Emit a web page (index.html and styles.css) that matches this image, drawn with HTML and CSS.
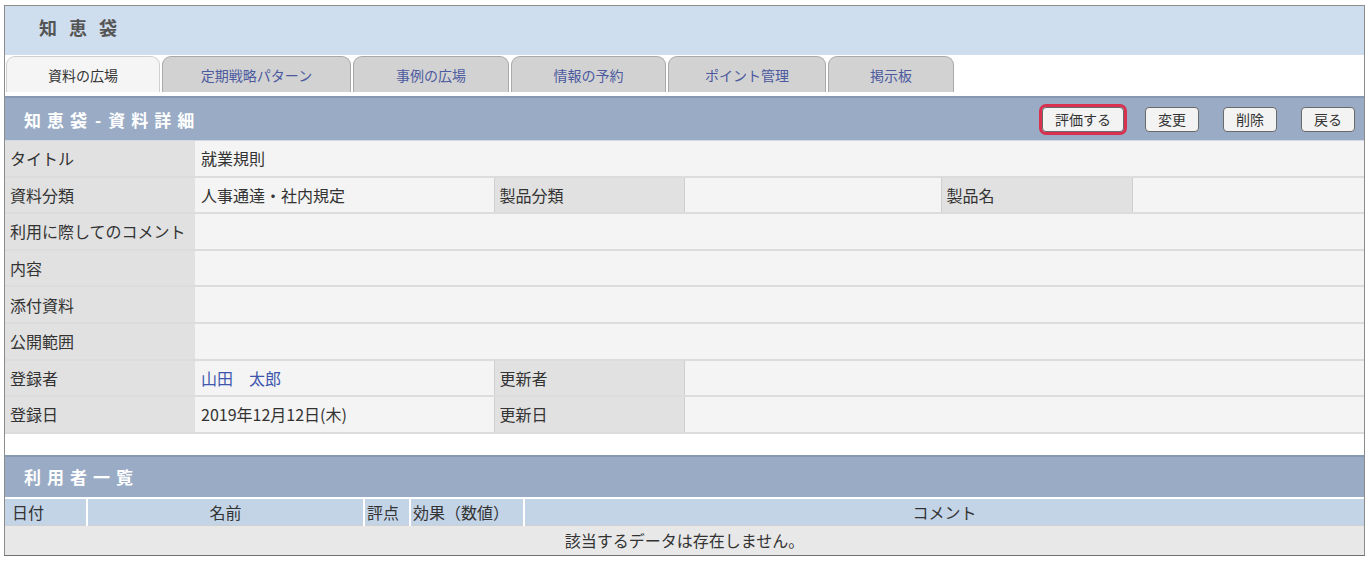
FILE: index.html
```html
<!DOCTYPE html>
<html lang="ja">
<head>
    <meta charset="UTF-8">
    <title>知恵袋 - 資料詳細</title>
    <link rel="stylesheet" href="styles.css">
</head>
<body>
    <div class="frame">
        <div class="app-head">知恵袋</div>

        <div class="tabs">
            <div class="tab active">資料の広場</div>
            <div class="tab w189">定期戦略パターン</div>
            <div class="tab w156">事例の広場</div>
            <div class="tab w155">情報の予約</div>
            <div class="tab w158">ポイント管理</div>
            <div class="tab w126">掲示板</div>
        </div>

        <div class="bar">
            <div class="bar-title">知恵袋<span class="dash">-</span>資料詳細</div>
            <div class="bar-btns">
                <button class="btn mark">評価する</button>
                <button class="btn">変更</button>
                <button class="btn">削除</button>
                <button class="btn">戻る</button>
            </div>
        </div>

        <table class="detail">
            <colgroup>
                <col style="width:190px">
                <col style="width:299px">
                <col style="width:190px">
                <col style="width:257px">
                <col style="width:191px">
                <col>
            </colgroup>
            <tr><th>タイトル</th><td colspan="5">就業規則</td></tr>
            <tr><th>資料分類</th><td>人事通達・社内規定</td><th>製品分類</th><td></td><th>製品名</th><td></td></tr>
            <tr><th>利用に際してのコメント</th><td colspan="5"></td></tr>
            <tr><th>内容</th><td colspan="5"></td></tr>
            <tr><th>添付資料</th><td colspan="5"></td></tr>
            <tr><th>公開範囲</th><td colspan="5"></td></tr>
            <tr><th>登録者</th><td><a class="user" href="#">山田　太郎</a></td><th>更新者</th><td colspan="3"></td></tr>
            <tr><th>登録日</th><td>2019年12月12日(木)</td><th>更新日</th><td colspan="3"></td></tr>
        </table>

        <div class="spacer"></div>

        <div class="bar small">
            <div class="bar-title">利用者一覧</div>
        </div>

        <table class="users">
            <colgroup>
                <col style="width:82px">
                <col style="width:277px">
                <col style="width:46px">
                <col style="width:114px">
                <col>
            </colgroup>
            <tr class="head">
                <th>日付</th>
                <th class="c">名前</th>
                <th class="tight">評点</th>
                <th class="tight">効果（数値）</th>
                <th class="c">コメント</th>
            </tr>
            <tr><td colspan="5" class="empty">該当するデータは存在しません。</td></tr>
        </table>
    </div>
</body>
</html>
```

FILE: styles.css
```css
/* 知恵袋 資料詳細 */
body {
    margin: 0;
    padding: 0;
    background: #fff;
    font-family: "Noto Sans CJK JP", "Noto Sans", sans-serif;
    color: #333;
}

.frame {
    width: 1359px;
    margin: 5px 0 0 4px;
    border: 1px solid #8c8c8c;
    border-bottom-color: #6f6f6f;
}

.app-head {
    height: 49px;
    line-height: 42px;
    background: #cfdeee;
    padding-left: 34px;
    font-size: 18px;
    font-weight: bold;
    letter-spacing: 12px;
    color: #555;
}

.tabs {
    display: flex;
    gap: 2px;
    padding: 1px 0 4px 1px;
    background: #fff;
}

.tab {
    width: 154px;
    height: 36px;
    line-height: 36px;
    box-sizing: border-box;
    border: 1px solid #a9a9a9;
    border-bottom: none;
    border-radius: 9px 9px 0 0;
    background: #d2d2d2;
    text-align: center;
    font-size: 14px;
    color: #4c5aa0;
}

.tab.active {
    background: #f5f5f5;
    color: #333;
    border-color: #cfcfcf;
}

.w189 { width: 189px; }
.w156 { width: 156px; }
.w155 { width: 155px; }
.w158 { width: 158px; }
.w126 { width: 126px; }

.bar {
    display: flex;
    align-items: center;
    justify-content: space-between;
    height: 42px;
    background: #9aacc5;
    border-top: 2px solid #8699b3;
    padding: 0 9px 0 19px;
}

.bar.small {
    height: 40px;
}

.bar-title {
    color: #fff;
    font-size: 17px;
    font-weight: bold;
    letter-spacing: 6px;
}

.dash {
    margin: 0 2px;
    letter-spacing: 5px;
}

.bar-btns {
    display: flex;
    gap: 24px;
}

.btn {
    height: 25px;
    padding: 0 12px;
    border: 1px solid #6a6a6a;
    border-radius: 4px;
    background: #f3f3f3;
    font-family: "Noto Sans CJK JP", sans-serif;
    font-size: 14px;
    color: #333;
    line-height: 22px;
}

.btn.mark {
    width: 82px;
    outline: 3px solid #d8304e;
    outline-offset: 0;
    margin-right: -3px;
}

table {
    width: 100%;
    border-collapse: collapse;
    table-layout: fixed;
}

.detail th,
.detail td {
    height: 34.6px;
    padding: 0 6px;
    font-size: 16px;
    font-weight: normal;
    text-align: left;
    border-top: 2px solid #dcdcdc;
    white-space: nowrap;
    overflow: hidden;
}

.detail tr:first-child th,
.detail tr:first-child td {
    border-top: 1px solid #d2d9e3;
}

.detail th {
    background: #e1e1e1;
    padding-left: 5px;
}

.detail td {
    background: #f4f4f4;
}

.detail td + th {
    border-left: 1px solid #cfcfcf;
    border-right: 1px solid #cfcfcf;
}

.user {
    color: #3e56ad;
    text-decoration: none;
}

.spacer {
    height: 21px;
    border-top: 2px solid #dcdcdc;
    background: #fff;
}

.users .head th {
    height: 26px;
    background: #c3d4e7;
    border-top: 2px solid #fff;
    border-left: 2px solid #fff;
    font-size: 16px;
    font-weight: normal;
    text-align: left;
    padding: 0 7px;
    white-space: nowrap;
}

.users .head th:first-child {
    border-left: none;
}

.users .head th.c {
    text-align: center;
}

.users .head th.tight {
    padding: 0 2px;
}

.users .empty {
    height: 27px;
    background: #e8e8e8;
    text-align: center;
    font-size: 16px;
    border-top: 1px solid #d0d0d0;
}
```
